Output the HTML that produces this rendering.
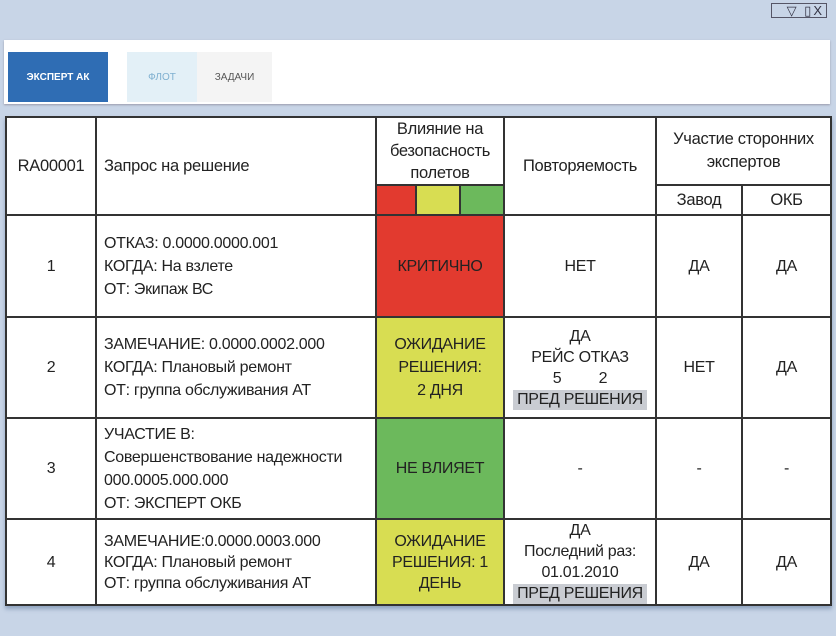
<!DOCTYPE html>
<html><head><meta charset="utf-8"><style>
*{margin:0;padding:0;box-sizing:border-box}
body{width:836px;height:636px;background:#c8d5e7;position:relative;overflow:hidden;font-family:"Liberation Sans","DejaVu Sans",sans-serif;color:#222}
.nav{position:absolute;left:4px;top:40px;width:826px;height:64px;background:#fff;box-shadow:0 1px 2px #99a}
.btn{position:absolute;top:12px;height:50px;font-size:10px;display:flex;align-items:center;justify-content:center}
table{position:absolute;left:5px;top:116px;border-collapse:collapse;background:#fff;box-shadow:0 3px 4px #8fa3bf;table-layout:fixed}
td{border:2px solid #333;font-size:16px;text-align:center;vertical-align:middle;line-height:23px;padding:0;letter-spacing:-0.3px;overflow:hidden}
.h td{font-size:16.5px}
.l{text-align:left;padding-left:7px;white-space:nowrap}
.red{background:#e23a2f}.yel{background:#d8dd52}.grn{background:#6cb95c}
.tag{background:#c9ccd2;display:inline-block;padding:0 4px;line-height:20px}
.r4 td{line-height:21px}
.ctl{position:absolute;left:771px;top:3px;width:56px;height:15px;border:1px solid #556;font-size:13px;line-height:13px;color:#334;text-align:right;padding-right:2px;letter-spacing:2px}
</style></head><body>
<div class="ctl">▽ ▯X</div>
<div class="nav">
<div class="btn" style="left:4px;width:100px;background:#2f6db4;color:#fff;font-weight:bold">ЭКСПЕРТ АК</div>
<div class="btn" style="left:123px;width:70px;background:#e3f0f7;color:#7fb0d0">ФЛОТ</div>
<div class="btn" style="left:193px;width:75px;background:#f4f4f4;color:#555">ЗАДАЧИ</div>
</div>
<table>
<colgroup><col style="width:90px"><col style="width:280px"><col style="width:40px"><col style="width:44px"><col style="width:44px"><col style="width:152px"><col style="width:86px"><col style="width:89px"></colgroup>
<tr class="h" style="height:66px"><td rowspan="2">RA00001</td><td rowspan="2" class="l">Запрос на решение</td><td colspan="3" style="line-height:22px">Влияние на<br>безопасность<br>полетов</td><td rowspan="2">Повторяемость</td><td colspan="2">Участие сторонних<br>экспертов</td></tr>
<tr class="h" style="height:30px"><td class="red"></td><td class="yel"></td><td class="grn"></td><td>Завод</td><td>ОКБ</td></tr>
<tr style="height:102px"><td>1</td><td class="l">ОТКАЗ: 0.0000.0000.001<br>КОГДА: На взлете<br>ОТ: Экипаж ВС</td><td colspan="3" class="red">КРИТИЧНО</td><td>НЕТ</td><td>ДА</td><td>ДА</td></tr>
<tr style="height:101px"><td>2</td><td class="l">ЗАМЕЧАНИЕ: 0.0000.0002.000<br>КОГДА: Плановый ремонт<br>ОТ: группа обслуживания АТ</td><td colspan="3" class="yel">ОЖИДАНИЕ<br>РЕШЕНИЯ:<br>2 ДНЯ</td><td style="line-height:21px">ДА<br>РЕЙС ОТКАЗ<br>5 &nbsp; &nbsp; &nbsp; &nbsp; 2<br><span class="tag">ПРЕД РЕШЕНИЯ</span></td><td>НЕТ</td><td>ДА</td></tr>
<tr style="height:101px"><td>3</td><td class="l">УЧАСТИЕ В:<br>Совершенствование надежности<br>000.0005.000.000<br>ОТ: ЭКСПЕРТ ОКБ</td><td colspan="3" class="grn">НЕ ВЛИЯЕТ</td><td>-</td><td>-</td><td>-</td></tr>
<tr class="r4" style="height:86px"><td>4</td><td class="l">ЗАМЕЧАНИЕ:0.0000.0003.000<br>КОГДА: Плановый ремонт<br>ОТ: группа обслуживания АТ</td><td colspan="3" class="yel">ОЖИДАНИЕ<br>РЕШЕНИЯ: 1<br>ДЕНЬ</td><td>ДА<br>Последний раз:<br>01.01.2010<br><span class="tag">ПРЕД РЕШЕНИЯ</span></td><td>ДА</td><td>ДА</td></tr>
</table>
</body></html>
